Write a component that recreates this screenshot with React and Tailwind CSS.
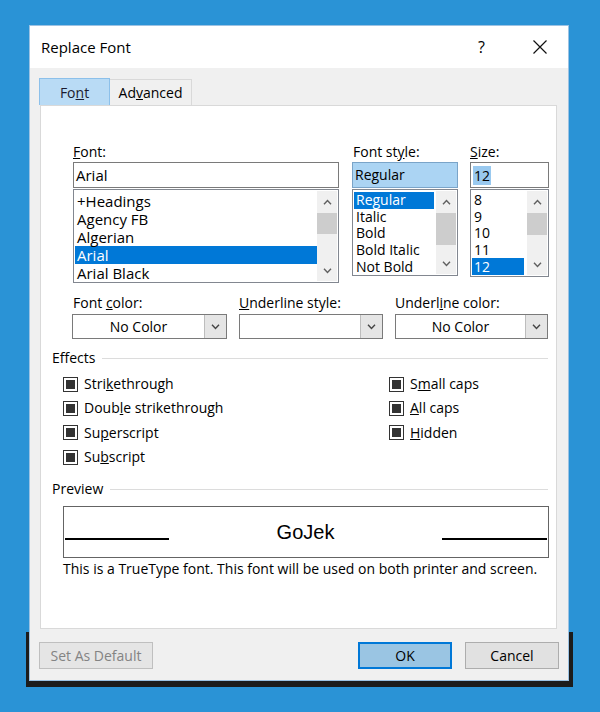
import React from 'react'

const ChevUp = () => (
  <svg width="9" height="6" viewBox="0 0 9 6">
    <path d="M1 5.2 L4.5 1.5 L8 5.2" fill="none" stroke="#606060" strokeWidth="1.4" />
  </svg>
)

const ChevDown = ({ color = '#606060' }) => (
  <svg width="9" height="6" viewBox="0 0 9 6">
    <path d="M1 0.8 L4.5 4.5 L8 0.8" fill="none" stroke={color} strokeWidth="1.4" />
  </svg>
)

function ScrollBar({ thumb }) {
  return (
    <div className="w-[20px] h-full bg-[#f0f0f0] flex flex-col">
      <div className="h-[22px] flex items-center justify-center">
        <ChevUp />
      </div>
      <div className={`w-full bg-[#cdcdcd] ${thumb}`} />
      <div className="flex-1" />
      <div className="h-[21px] flex items-center justify-center">
        <ChevDown />
      </div>
    </div>
  )
}

function ListBox({ items, selected, box, itemH, text, selW, thumb }) {
  return (
    <div className={`mt-[1px] border border-[#828790] bg-white flex p-[1px] ${box}`}>
      <div className="flex-1 pt-[1px]">
        {items.map(it => (
          <div key={it} className={`flex items-center pl-[2px] ${itemH} ${text} ${selW} ${it === selected ? 'bg-[#0078d7] text-white' : 'text-black'}`}>
            {it}
          </div>
        ))}
      </div>
      <ScrollBar thumb={thumb} />
    </div>
  )
}

function Dropdown({ w, value }) {
  return (
    <div className={`flex h-[25px] border border-[#7a7a7a] bg-white ${w}`}>
      <div className="flex-1 flex items-center justify-center text-[14px] leading-[18px]">{value}</div>
      <div className="w-[22px] h-full bg-[#e5e5e5] border-l border-[#bdbdbd] flex items-center justify-center">
        <ChevDown color="#444" />
      </div>
    </div>
  )
}

function Check({ children }) {
  return (
    <div className="flex items-center h-[24.33px]">
      <div className="w-[15px] h-[15px] border border-[#333] bg-white flex items-center justify-center">
        <div className="w-[9px] h-[9px] bg-[#333]" />
      </div>
      <span className="ml-[6px] text-[14px] leading-[18px]">{children}</span>
    </div>
  )
}

function GroupHead({ label }) {
  return (
    <div className="flex items-center h-[18px] pl-[11px] pr-[8px]">
      <span className="text-[14px] leading-[18px]">{label}</span>
      <div className="flex-1 h-px bg-[#dcdcdc] ml-[7px]" />
    </div>
  )
}

export default function App() {
  return (
    <div className="w-[600px] h-[712px] bg-[#2a93d6] pt-[25px] pl-[29px] text-black font-['Segoe_UI','Open_Sans',sans-serif]">
      <div className="relative w-[540px] h-[656px]">
        {/* dark frame peeking out under the window */}
        <div className="absolute left-[-3px] right-[-4px] top-[607px] bottom-[-6px] bg-[#1c1c1c]" />
        <div className="relative h-full flex flex-col bg-[#f0f0f0] border border-[#9cc2e3]">
          {/* title bar */}
          <div className="h-[42px] bg-white flex items-center pl-[11px] pr-[21px]">
            <span className="text-[15px]">Replace Font</span>
            <span className="ml-auto text-[16px] mr-[48px]">?</span>
            <svg width="14" height="14" viewBox="0 0 14 14">
              <path d="M0.5 0.5 L13.5 13.5 M13.5 0.5 L0.5 13.5" stroke="#111" strokeWidth="1.2" />
            </svg>
          </div>

          <div className="flex-1 flex flex-col pt-[10px] pl-[10px] pr-[11px]">
            {/* tabs */}
            <div className="flex items-end h-[27px] ml-[-1px]">
              <div className="w-[71px] h-[27px] bg-[#b9dbf5] border border-b-0 border-[#8cc0ea] flex items-center justify-center text-[14px] text-[#1a1a2e]">
                Fo<u>n</u>t
              </div>
              <div className="w-[82px] h-[26px] bg-[#f0f0f0] border border-l-0 border-b-0 border-[#d9d9d9] flex items-center justify-center text-[14px]">
                Ad<u>v</u>anced
              </div>
            </div>

            {/* tab panel */}
            <div className="h-[524px] bg-white border border-[#d9d9d9] flex flex-col pt-[37px]">
              <div className="flex pl-[32px]">
                <div className="w-[266px] flex flex-col">
                  <div className="h-[19px] text-[14px] leading-[18px]"><u>F</u>ont:</div>
                  <div className="h-[26px] border border-[#7a7a7a] flex items-center pl-[2px] text-[15px] leading-[20px]">Arial</div>
                  <ListBox
                    items={['+Headings', 'Agency FB', 'Algerian', 'Arial', 'Arial Black']}
                    selected="Arial"
                    box="h-[94px]"
                    itemH="h-[18px]"
                    text="text-[15px] leading-[18px]"
                    selW="w-full"
                    thumb="h-[21px]"
                  />
                </div>
                <div className="w-[106px] ml-[13px] flex flex-col">
                  <div className="h-[19px] text-[14px] leading-[18px] pl-[1px]">Font st<u>y</u>le:</div>
                  <div className="h-[26px] border border-[#7aa4c8] bg-[#abd4f3] flex items-center pl-[2px] text-[14px] leading-[18px]">Regular</div>
                  <ListBox
                    items={['Regular', 'Italic', 'Bold', 'Bold Italic', 'Not Bold']}
                    selected="Regular"
                    box="h-[87px]"
                    itemH="h-[16.6px]"
                    text="text-[14px] leading-[16px]"
                    selW="w-[80px]"
                    thumb="h-[32px]"
                  />
                </div>
                <div className="w-[79px] ml-[12px] flex flex-col">
                  <div className="h-[19px] text-[14px] leading-[18px]"><u>S</u>ize:</div>
                  <div className="h-[26px] border border-[#7a7a7a] flex items-center pl-[2px] text-[14px]">
                    <span className="bg-[#99c9ef] px-[1px] leading-[19px]">12</span>
                  </div>
                  <ListBox
                    items={['8', '9', '10', '11', '12']}
                    selected="12"
                    box="h-[88px]"
                    itemH="h-[16.6px]"
                    text="text-[14px] leading-[16px]"
                    selW="w-[52px]"
                    thumb="h-[22px]"
                  />
                </div>
              </div>

              {/* colour / underline dropdowns */}
              <div className="flex pl-[31px] mt-[11px]">
                <div className="w-[155px] flex flex-col">
                  <div className="h-[20px] text-[14px] leading-[18px] pl-[1px]">Font <u>c</u>olor:</div>
                  <Dropdown w="w-[155px]" value="No Color" />
                </div>
                <div className="w-[144px] ml-[12px] flex flex-col">
                  <div className="h-[20px] text-[14px] leading-[18px]"><u>U</u>nderline style:</div>
                  <Dropdown w="w-[144px]" value="" />
                </div>
                <div className="w-[153px] ml-[12px] flex flex-col">
                  <div className="h-[20px] text-[14px] leading-[18px]">Underl<u>i</u>ne color:</div>
                  <Dropdown w="w-[153px]" value="No Color" />
                </div>
              </div>

              {/* effects */}
              <div className="mt-[10px]">
                <GroupHead label="Effects" />
              </div>
              <div className="flex pl-[22px] mt-[5px]">
                <div className="w-[326px]">
                  <Check>Stri<u>k</u>ethrough</Check>
                  <Check>Doub<u>l</u>e strikethrough</Check>
                  <Check>Su<u>p</u>erscript</Check>
                  <Check>Su<u>b</u>script</Check>
                </div>
                <div>
                  <Check>S<u>m</u>all caps</Check>
                  <Check><u>A</u>ll caps</Check>
                  <Check><u>H</u>idden</Check>
                </div>
              </div>

              {/* preview */}
              <div className="mt-[11px]">
                <GroupHead label="Preview" />
              </div>
              <div className="ml-[22px] mr-[7px] mt-[8px] h-[52px] border border-[#646464] flex items-center px-[1px]">
                <div className="w-[104px] h-[2px] bg-black mt-[14px]" />
                <div className="flex-1 text-center text-[20px] leading-[24px] font-['Liberation_Sans',Arial,sans-serif]">GoJek</div>
                <div className="w-[105px] h-[2px] bg-black mt-[14px]" />
              </div>
              <div className="ml-[22px] mt-[2px] h-[18px] text-[14px] leading-[18px]">
                This is a TrueType font. This font will be used on both printer and screen.
              </div>
            </div>

            {/* buttons */}
            <div className="flex mt-[13px] ml-[-1px] h-[27px]">
              <div className="w-[114px] h-full border border-[#bfbfbf] bg-[#e5e5e5] flex items-center justify-center text-[14px] text-[#838383]">
                Set As Default
              </div>
              <div className="ml-auto w-[94px] h-full border-2 border-[#0078d7] bg-[#9ac5e3] flex items-center justify-center text-[14px]">
                OK
              </div>
              <div className="ml-[13px] mr-[-2px] w-[94px] h-full border border-[#adadad] bg-[#e1e1e1] flex items-center justify-center text-[14px]">
                Cancel
              </div>
            </div>
          </div>
        </div>
      </div>
    </div>
  )
}
